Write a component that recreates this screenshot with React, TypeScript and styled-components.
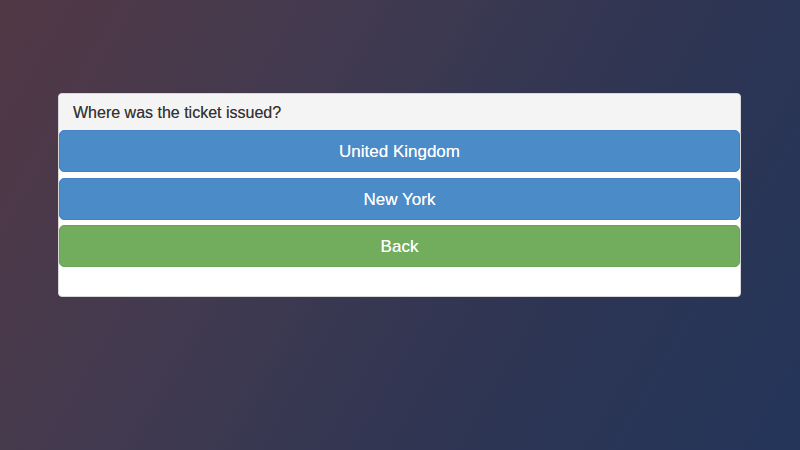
import React from "react";
import styled, { createGlobalStyle } from "styled-components";

const Global = createGlobalStyle`
  html, body { margin: 0; padding: 0; }
  body {
    width: 800px;
    height: 450px;
    overflow: hidden;
    font-family: "Liberation Sans", Arial, Helvetica, sans-serif;
  }
`;

const Page = styled.div`
  box-sizing: border-box;
  width: 800px;
  height: 450px;
  padding: 93px 59px 0 58px;
  background: linear-gradient(120deg, #523845 0%, #413a50 35%, #2f3553 65%, #24355a 100%);
`;

const Panel = styled.div`
  background: #ffffff;
  border: 1px solid #d8d8d8;
  border-radius: 4px;
  overflow: hidden;
  display: flex;
  flex-direction: column;
`;

const Heading = styled.div`
  box-sizing: border-box;
  height: 36px;
  padding: 1px 14px 0;
  display: flex;
  align-items: center;
  background: #f4f4f4;
  color: #333333;
  font-size: 16px;
  text-shadow: 0 0 0.5px rgba(51, 51, 51, 0.6);
`;

const Options = styled.div`
  display: flex;
  flex-direction: column;
  gap: 5px;
  padding-bottom: 29px;
`;

const Choice = styled.button<{ $tone: "blue" | "green" }>`
  box-sizing: border-box;
  height: 42px;
  width: 100%;
  margin: 0;
  padding: 2px 12px 0;
  border: 1px solid ${(p) => (p.$tone === "blue" ? "#4584c0" : "#6aa555")};
  border-radius: 5px;
  background: ${(p) => (p.$tone === "blue" ? "#4a8bc8" : "#72ad5d")};
  color: #ffffff;
  font-family: "Liberation Sans", Arial, Helvetica, sans-serif;
  font-size: 17px;
  text-shadow: 0 0 0.6px rgba(255, 255, 255, 0.8);
  cursor: pointer;
  &:nth-child(2) { margin-top: 1px; }
`;

export default function App() {
  return (
    <>
      <Global />
      <Page>
        <Panel>
          <Heading>Where was the ticket issued?</Heading>
          <Options>
            <Choice $tone="blue">United Kingdom</Choice>
            <Choice $tone="blue">New York</Choice>
            <Choice $tone="green">Back</Choice>
          </Options>
        </Panel>
      </Page>
    </>
  );
}
